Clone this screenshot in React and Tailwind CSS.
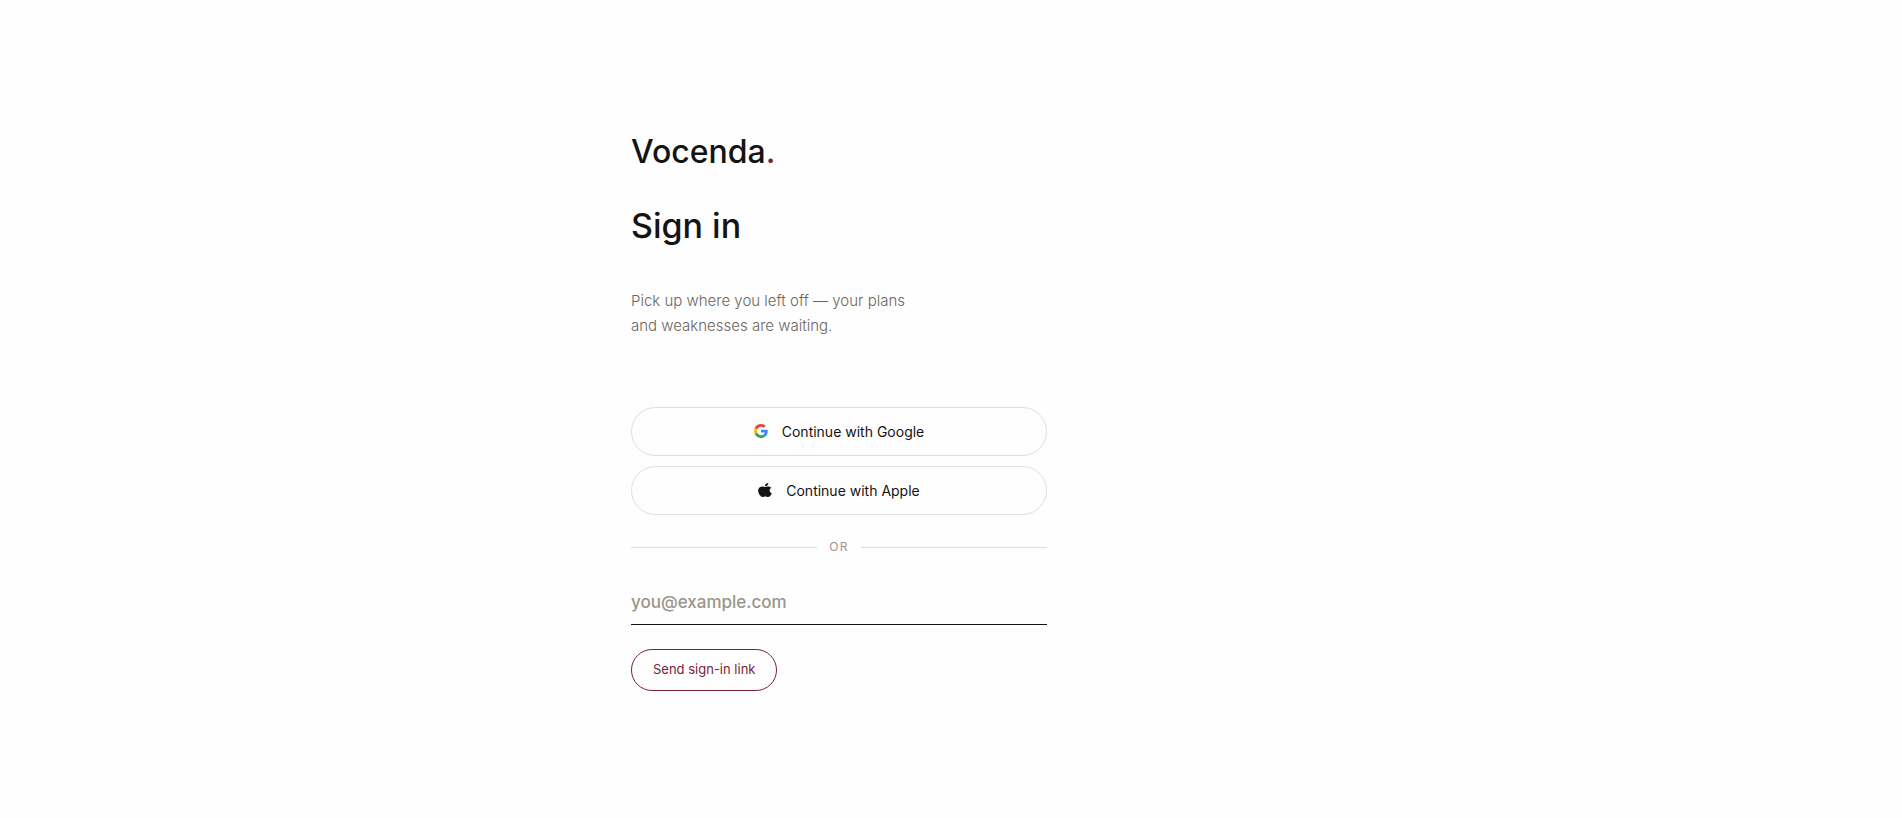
function GoogleIcon() {
  return (
    <svg viewBox="0 0 48 48" className="size-[14px]" aria-hidden="true">
      <path fill="#EA4335" d="M24 9.5c3.54 0 6.71 1.22 9.21 3.6l6.85-6.85C35.9 2.38 30.47 0 24 0 14.62 0 6.51 5.38 2.56 13.22l7.98 6.19C12.43 13.72 17.74 9.5 24 9.5z" />
      <path fill="#4285F4" d="M46.98 24.55c0-1.57-.15-3.09-.38-4.55H24v9.02h12.94c-.58 2.96-2.26 5.48-4.78 7.18l7.73 6c4.51-4.18 7.09-10.36 7.09-17.65z" />
      <path fill="#FBBC05" d="M10.53 28.59c-.48-1.45-.76-2.99-.76-4.59s.27-3.14.76-4.59l-7.98-6.19C.92 16.46 0 20.12 0 24c0 3.88.92 7.54 2.56 10.78l7.97-6.19z" />
      <path fill="#34A853" d="M24 48c6.48 0 11.93-2.13 15.89-5.81l-7.73-6c-2.15 1.45-4.92 2.3-8.16 2.3-6.26 0-11.57-4.22-13.47-9.91l-7.98 6.19C6.51 42.62 14.62 48 24 48z" />
    </svg>
  );
}

function AppleIcon() {
  return (
    <svg viewBox="2 0 20 24" className="h-[14px] w-[14px]" preserveAspectRatio="none" fill="currentColor" aria-hidden="true">
      <path d="M12.152 6.896c-.948 0-2.415-1.078-3.96-1.04-2.04.027-3.91 1.183-4.961 3.014-2.117 3.675-.546 9.103 1.519 12.09 1.013 1.454 2.208 3.09 3.792 3.039 1.52-.065 2.09-.987 3.935-.987 1.831 0 2.35.987 3.96.948 1.637-.026 2.676-1.48 3.676-2.948 1.156-1.688 1.636-3.325 1.662-3.415-.039-.013-3.182-1.221-3.22-4.857-.026-3.04 2.48-4.494 2.597-4.559-1.429-2.09-3.623-2.324-4.39-2.376-2-.156-3.675 1.09-4.61 1.09zM15.53 3.83c.843-1.012 1.4-2.427 1.245-3.83-1.207.052-2.662.805-3.532 1.818-.78.896-1.454 2.338-1.273 3.714 1.338.104 2.715-.688 3.559-1.701" />
    </svg>
  );
}

function ProviderButton({ icon, children }) {
  return (
    <button type="button" className="flex h-[49px] w-full items-center justify-center gap-[14px] rounded-full border border-[#e0ded7] text-sm font-normal">
      <span className="pb-0.5">{icon}</span>
      {children}
    </button>
  );
}

export default function App() {
  return (
    <main className="flex min-h-screen items-center justify-center bg-[#fefefe] pt-[5px] font-['Inter',sans-serif] text-[#141414]">
      <div className="w-full max-w-[640px]">
        <div className="max-w-[416px]">
          <p className="text-[32px] leading-10 font-medium">
            Vocenda<span className="text-[#7b2335]">.</span>
          </p>
          <h1 className="mt-8 text-[34px] leading-11 font-medium">Sign in</h1>
          <p className="mt-10 max-w-[300px] text-[15px] leading-[25px] font-light text-[#6b6660]">
            Pick up where you left off — your plans and weaknesses are waiting.
          </p>

          <div className="mt-[69px] flex flex-col gap-[10px]">
            <ProviderButton icon={<GoogleIcon />}>Continue with Google</ProviderButton>
            <ProviderButton icon={<AppleIcon />}>Continue with Apple</ProviderButton>
          </div>

          <div className="mt-6 flex items-center gap-3 text-xs leading-4 tracking-widest text-[#99958c]">
            <span className="h-px flex-1 bg-[#dededc]" />
            OR
            <span className="h-px flex-1 bg-[#dededc]" />
          </div>

          <form onSubmit={(event) => event.preventDefault()}>
            <input
              type="email"
              aria-label="Email address"
              placeholder="you@example.com"
              className="mt-6 block h-[46px] w-full border-b border-[#141414] bg-transparent text-[17px] font-medium outline-none placeholder:text-[#9a958a]"
            />
            <button type="submit" className="mt-6 h-[42px] rounded-full border border-[#7b2335] px-[21px] text-[13px] text-[#7b2335]">
              Send sign-in link
            </button>
          </form>
        </div>
      </div>
    </main>
  );
}
